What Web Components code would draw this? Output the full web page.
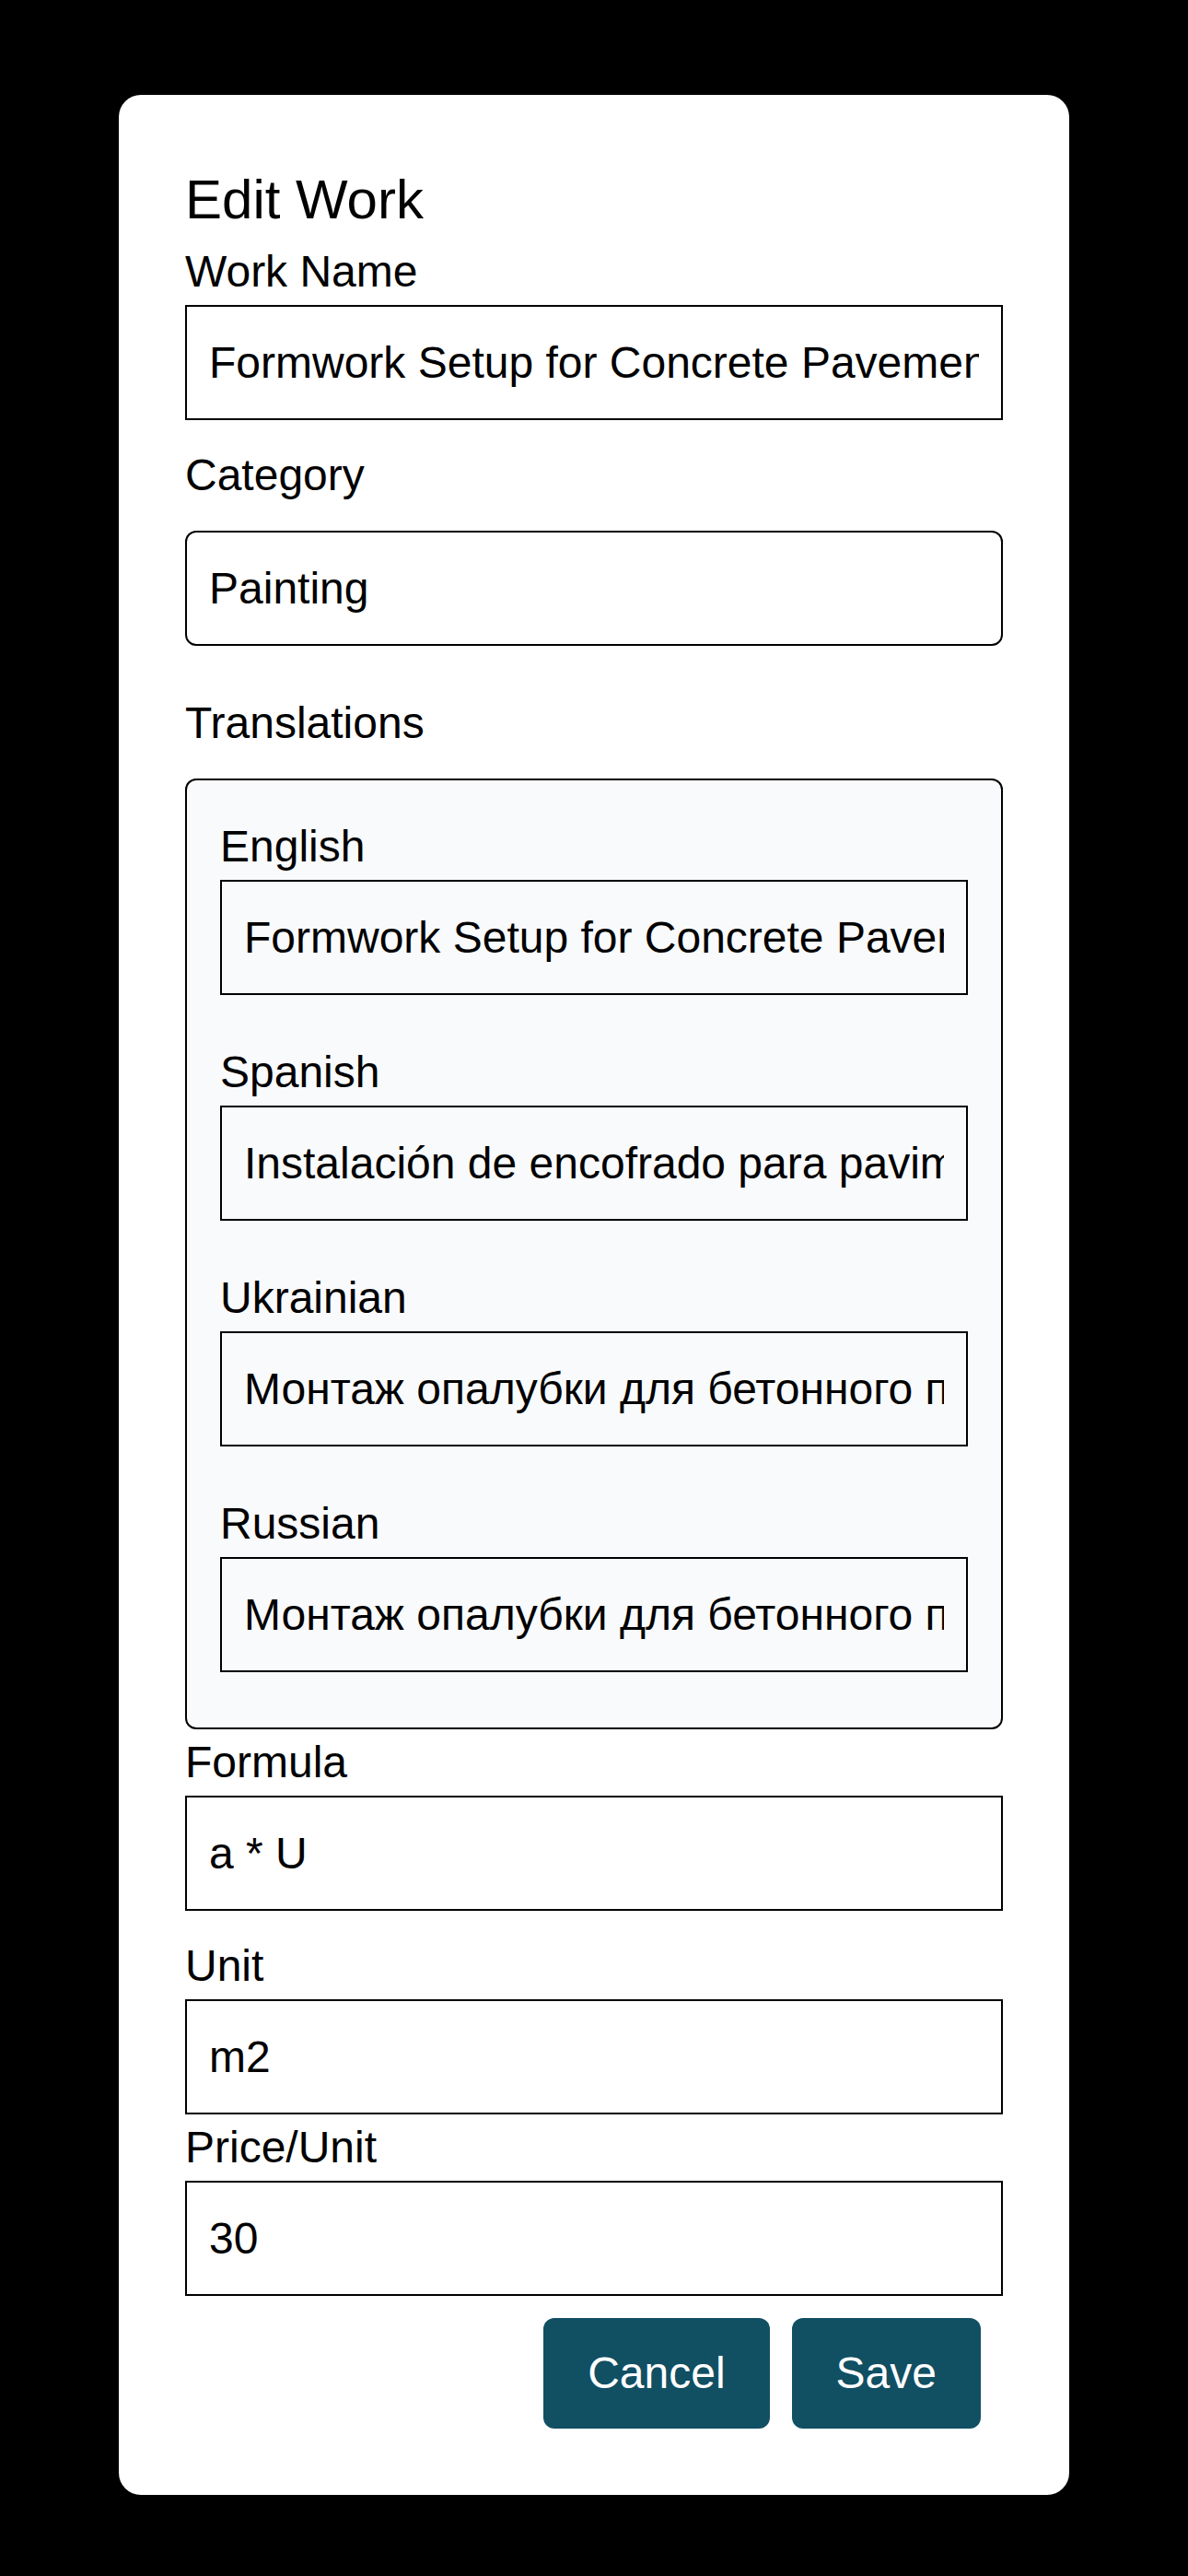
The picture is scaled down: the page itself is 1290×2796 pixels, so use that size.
<!DOCTYPE html>
<html lang="en">
<head>
<meta charset="utf-8">
<meta name="viewport" content="width=device-width, initial-scale=1">
<title>Edit Work</title>
<style>
  * { box-sizing: border-box; }
  body {
    margin: 0;
    min-height: 100vh;
    padding: 8% 10% 6%;
    background: #000;
    color: #000;
    font: 48px/72px "Liberation Sans", Arial, sans-serif;
  }
</style>
</head>
<body>
<edit-dialog heading="Edit Work">
  <text-field label="Work Name" value="Formwork Setup for Concrete Pavement"></text-field>
  <select-field label="Category" options="Painting,Concrete,Flooring"></select-field>
  <field-group label="Translations">
    <text-field label="English" value="Formwork Setup for Concrete Pavement"></text-field>
    <text-field label="Spanish" value="Instalación de encofrado para pavimento de hormigón"></text-field>
    <text-field label="Ukrainian" value="Монтаж опалубки для бетонного покриття"></text-field>
    <text-field label="Russian" value="Монтаж опалубки для бетонного покрытия"></text-field>
  </field-group>
  <field-stack>
    <text-field label="Formula" value="a * U"></text-field>
    <div>
      <text-field label="Unit" value="m2"></text-field>
      <text-field label="Price/Unit" value="30" inputmode="decimal"></text-field>
    </div>
  </field-stack>
  <action-button slot="actions">Cancel</action-button>
  <action-button slot="actions">Save</action-button>
</edit-dialog>

<script>
  class BaseElement extends HTMLElement {
    connectedCallback() {
      if (this.shadowRoot) return;
      const template = document.createElement('template');
      template.innerHTML = '<style>*{box-sizing:border-box}:host{display:block}' +
        this.constructor.styles + '</style>' + this.constructor.markup;
      this.attachShadow({ mode: 'open' }).append(template.content.cloneNode(true));
      this.ready();
    }
    $(selector) { return this.shadowRoot.querySelector(selector); }
    ready() {}
  }

  const controlStyles = `
    label { display: block; }
    .control {
      display: block;
      width: 100%;
      margin: 0;
      padding: 24px;
      border: 2px solid #000;
      border-radius: 0;
      background: transparent;
      color: inherit;
      font: inherit;
      line-height: 73px;
      height: 125px;
      appearance: none;
    }`;

  customElements.define('text-field', class extends BaseElement {
    static styles = controlStyles;
    static markup = '<label for="control"></label><input class="control" id="control" type="text">';
    ready() {
      this.$('label').textContent = this.getAttribute('label');
      const input = this.$('input');
      input.value = this.getAttribute('value');
      if (this.hasAttribute('inputmode')) input.inputMode = this.getAttribute('inputmode');
    }
  });

  customElements.define('select-field', class extends BaseElement {
    static styles = controlStyles + `
      :host { margin: 24px 0 48px; }
      label { margin-bottom: 24px; }
      .control { border-radius: 12px; }`;
    static markup = '<label for="control"></label><select class="control" id="control"></select>';
    ready() {
      this.$('label').textContent = this.getAttribute('label');
      for (const name of this.getAttribute('options').split(',')) {
        this.$('select').add(new Option(name));
      }
    }
  });

  customElements.define('field-group', class extends BaseElement {
    static styles = `
      #name { margin-bottom: 24px; }
      .panel {
        display: flex;
        flex-direction: column;
        gap: 48px;
        padding: 36px 36px 60px;
        border: 2px solid #000;
        border-radius: 12px;
        background: #f9fafc;
      }`;
    static markup = '<div id="name"></div><div class="panel" role="group" aria-labelledby="name"><slot></slot></div>';
    ready() { this.$('#name').textContent = this.getAttribute('label'); }
  });

  customElements.define('field-stack', class extends BaseElement {
    static styles = ':host { display: flex; flex-direction: column; gap: 24px; }';
    static markup = '<slot></slot>';
  });

  customElements.define('action-button', class extends BaseElement {
    static styles = `
      button {
        display: block;
        margin: 0;
        padding: 24px 48px;
        border: 0;
        border-radius: 12px;
        background: #114f63;
        color: #fff;
        font: inherit;
        cursor: pointer;
      }`;
    static markup = '<button type="button"><slot></slot></button>';
  });

  customElements.define('edit-dialog', class extends BaseElement {
    static styles = `
      section { padding: 72px; border-radius: 24px; background: #fff; }
      h1 { margin: 0; font-size: 60px; line-height: 84px; font-weight: 400; }
      footer { display: flex; justify-content: flex-end; gap: 24px; padding: 24px 24px 0; }`;
    static markup = `
      <section role="dialog" aria-labelledby="heading">
        <h1 id="heading"></h1>
        <slot></slot>
        <footer><slot name="actions"></slot></footer>
      </section>`;
    ready() { this.$('h1').textContent = this.getAttribute('heading'); }
  });
</script>
</body>
</html>
